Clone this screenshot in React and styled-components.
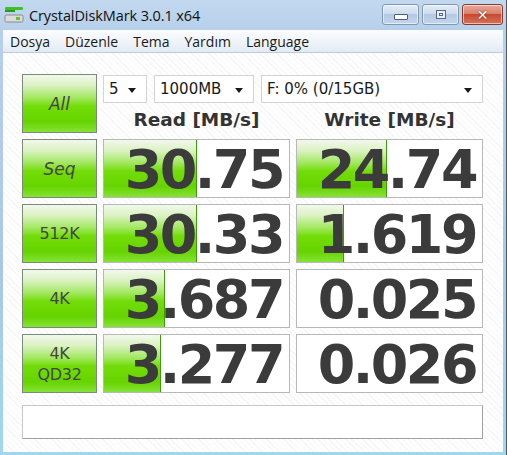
import React from 'react'
import styled, { createGlobalStyle } from 'styled-components'

const rows = [
  { label: ['Seq'], hand: true, read: '30.75', readBar: 92, write: '24.74', writeBar: 89 },
  { label: ['512K'], read: '30.33', readBar: 92, write: '1.619', writeBar: 46 },
  { label: ['4K'], read: '3.687', readBar: 60, write: '0.025', writeBar: 0 },
  { label: ['4K', 'QD32'], read: '3.277', readBar: 56, write: '0.026', writeBar: 0 },
]

const menu = ['Dosya', 'Düzenle', 'Tema', 'Yardım', 'Language']

const green = `linear-gradient(to bottom, #f2f8ec 0%, #dcf2c4 18%, #a2e860 40%, #72dc08 55%, #66d400 82%, #86e236 100%)`

const App = () => (
  <>
    <Global />
    <Window>
      <TitleBar>
        <AppIcon />
        <Title>CrystalDiskMark 3.0.1 x64</Title>
        <Caption>
          <CapButton>
            <MinGlyph />
          </CapButton>
          <CapButton>
            <MaxGlyph />
          </CapButton>
          <CloseButton>✕</CloseButton>
        </Caption>
      </TitleBar>
      <Frame>
        <MenuBar>
          {menu.map((m) => (
            <MenuItem key={m}>{m}</MenuItem>
          ))}
        </MenuBar>
        <Client>
          <Grid>
            <TestButton hand>All</TestButton>
            <TopRight>
              <ComboRow>
                <Combo width="44px">5</Combo>
                <Combo width="100px">1000MB</Combo>
                <Combo grow>F: 0% (0/15GB)</Combo>
              </ComboRow>
              <Header>Read [MB/s]</Header>
              <Header>Write [MB/s]</Header>
            </TopRight>
            {rows.map((r) => (
              <React.Fragment key={r.read + r.write}>
                <TestButton hand={r.hand} small={r.label.length > 1}>
                  {r.label.map((l) => (
                    <span key={l}>{l}</span>
                  ))}
                </TestButton>
                <Value>
                  {r.readBar > 0 && <Bar style={{ width: r.readBar }} />}
                  <Num>{r.read}</Num>
                </Value>
                <Value>
                  {r.writeBar > 0 && <Bar style={{ width: r.writeBar }} />}
                  <Num>{r.write}</Num>
                </Value>
              </React.Fragment>
            ))}
          </Grid>
          <Status />
        </Client>
      </Frame>
    </Window>
  </>
)

const AppIcon = () => (
  <svg width="20" height="20" viewBox="0 0 20 20">
    <rect x="1" y="2" width="18" height="3" rx="1" fill="#3fbf2a" />
    <rect x="1" y="5" width="10" height="2" fill="#2a9a1c" />
    <rect x="1" y="10" width="18" height="7" rx="1.5" fill="#dcdcdc" stroke="#8a8a8a" strokeWidth="1" />
    <rect x="12" y="12" width="4" height="3" fill="#5fc23a" />
  </svg>
)

const Global = createGlobalStyle`
  body {
    margin: 0;
    background: #ffffff;
  }
`

const Window = styled.div`
  width: 507px;
  height: 455px;
  box-sizing: border-box;
  display: flex;
  flex-direction: column;
  background: linear-gradient(to bottom, #c2d8ef 0%, #b7d0ea 30px, #a9c8e6 60%, #9fd8ee 100%);
  border-right: 1px solid #4a5a6a;
  font-family: 'DejaVu Sans', Verdana, sans-serif;
  overflow: hidden;
`

const TitleBar = styled.div`
  height: 30px;
  display: flex;
  align-items: center;
  padding-left: 4px;
  flex-shrink: 0;
`

const Title = styled.div`
  margin-left: 5px;
  font-family: 'Open Sans', 'Noto Sans', sans-serif;
  font-size: 14.5px;
  color: #111;
  letter-spacing: -0.1px;
`

const Caption = styled.div`
  margin-left: auto;
  margin-right: 3px;
  align-self: flex-start;
  margin-top: 4px;
  display: flex;
  gap: 3px;
`

const CapButton = styled.div`
  width: 37px;
  height: 21px;
  box-sizing: border-box;
  border: 1px solid #8198b4;
  border-radius: 3px;
  background: linear-gradient(to bottom, #e4edf7 0%, #cddcee 45%, #b4c9e2 50%, #c3d6ec 100%);
  display: flex;
  align-items: center;
  justify-content: center;
  box-shadow: inset 0 0 0 1px rgba(255, 255, 255, 0.55);
`

const MinGlyph = styled.div`
  width: 12px;
  height: 4px;
  margin-top: 5px;
  background: #fff;
  border: 1px solid #4d5f78;
  border-radius: 1px;
`

const MaxGlyph = styled.div`
  width: 8px;
  height: 7px;
  border: 1px solid #5a6a80;
  background: #e8eef6;
  box-shadow: inset 0 0 0 2px #e8eef6, inset 0 0 0 3px #5a6a80;
`

const CloseButton = styled(CapButton)`
  width: 41px;
  border-color: #8a3a2c;
  background: linear-gradient(to bottom, #e9a99a 0%, #d8826c 45%, #c74a30 50%, #d6735a 100%);
  color: #fff;
  font-size: 14px;
  font-weight: bold;
  text-shadow: 0 0 2px #6a1a10;
`

const Frame = styled.div`
  flex: 1;
  margin: 0 3px 3px 3px;
  display: flex;
  flex-direction: column;
  background: #fbfbfb;
`

const MenuBar = styled.div`
  height: 22px;
  display: flex;
  align-items: center;
  gap: 15px;
  padding-left: 7px;
  background: linear-gradient(to bottom, #fbfcfe 0%, #eef3f9 60%, #e3eaf3 100%);
  border-bottom: 1px solid #bfcbdb;
  flex-shrink: 0;
`

const MenuItem = styled.span`
  font-family: 'Open Sans', 'Noto Sans', sans-serif;
  font-size: 14px;
  color: #1a1a1a;
`

const Client = styled.div`
  flex: 1;
  padding: 21px 0 0 19px;
  background: repeating-linear-gradient(45deg, #ffffff 0px, #ffffff 3px, #f5f5f5 3px, #f5f5f5 4px);
`

const Grid = styled.div`
  display: grid;
  grid-template-columns: 75px 187px 187px;
  grid-auto-rows: 59px;
  column-gap: 6px;
  row-gap: 6px;
`

const TestButton = styled.div`
  box-sizing: border-box;
  border: 1px solid #7c8a78;
  background: ${green};
  display: flex;
  flex-direction: column;
  align-items: center;
  justify-content: center;
  color: #454545;
  font-size: ${(p) => (p.hand ? '17px' : '16px')};
  font-style: ${(p) => (p.hand ? 'italic' : 'normal')};
  line-height: ${(p) => (p.small ? '21px' : '20px')};
  letter-spacing: ${(p) => (p.hand ? '0' : '-0.3px')};
`

const TopRight = styled.div`
  grid-column: 2 / 4;
  display: grid;
  grid-template-columns: 187px 187px;
  grid-template-rows: 29px 30px;
  column-gap: 6px;
`

const ComboRow = styled.div`
  grid-column: 1 / 3;
  display: flex;
  gap: 7px;
  padding-top: 1px;
`

const Combo = styled.div`
  position: relative;
  box-sizing: border-box;
  height: 28px;
  width: ${(p) => p.width || 'auto'};
  flex: ${(p) => (p.grow ? 1 : 'none')};
  border: 1px solid #d4d4d4;
  background: #fff;
  display: flex;
  align-items: center;
  padding-left: 5px;
  font-size: 15px;
  color: #1a1a1a;

  &::after {
    content: '';
    position: absolute;
    right: 10px;
    top: 12px;
    border-left: 4px solid transparent;
    border-right: 4px solid transparent;
    border-top: 5px solid #1a1a1a;
  }
`

const Header = styled.div`
  display: flex;
  align-items: center;
  justify-content: center;
  padding-top: 3px;
  font-size: 18.5px;
  font-weight: bold;
  color: #333;
`

const Value = styled.div`
  position: relative;
  box-sizing: border-box;
  border: 1px solid #b8b8b8;
  background: #fff;
  display: flex;
  align-items: center;
  justify-content: flex-end;
  padding-right: 6px;
`

const Bar = styled.div`
  position: absolute;
  left: 0;
  top: 0;
  bottom: 0;
  background: ${green};
  border-right: 1px solid #3f9a12;
`

const Num = styled.span`
  position: relative;
  font-size: 54px;
  font-weight: bold;
  letter-spacing: -2.5px;
  color: #3b3b3b;
  line-height: 55px;
  padding-top: 2px;
`

const Status = styled.div`
  margin-top: 12px;
  width: 461px;
  height: 34px;
  box-sizing: border-box;
  background: #fff;
  border: 1px solid #a0a0a0;
  border-top-color: #c8c8c8;
  border-left-color: #c8c8c8;
`

export default App
